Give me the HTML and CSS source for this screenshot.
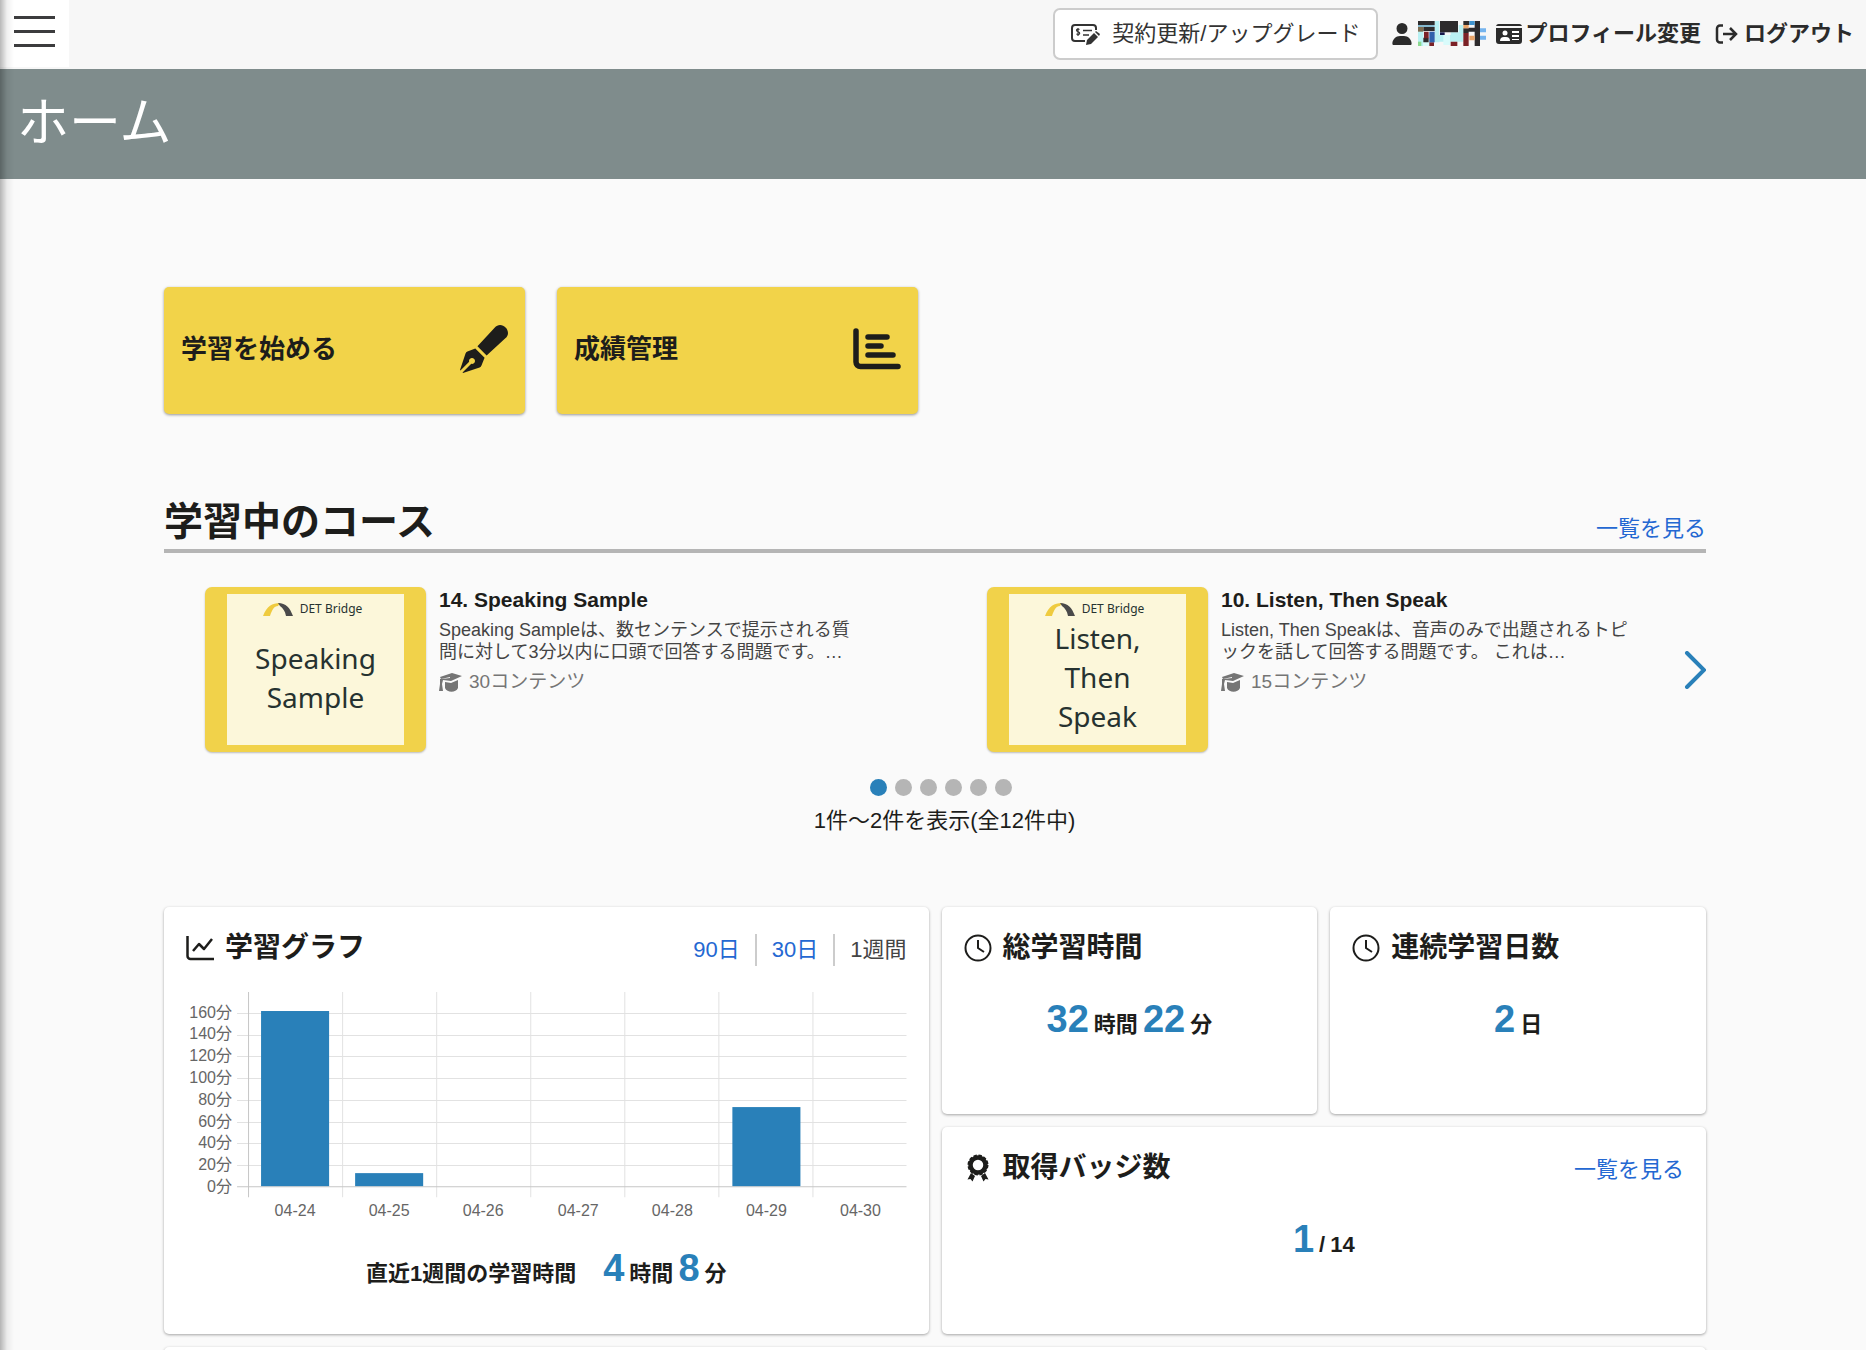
FILE: index.html
```html
<!DOCTYPE html>
<html lang="ja">
<head>
  <meta charset="UTF-8">
  <meta name="viewport" content="width=device-width, initial-scale=1">
  <title>ホーム</title>
  <link rel="stylesheet" href="styles.css">
</head>
<body>
  <div class="drawer-shadow"></div>

  <header class="topbar">
    <button class="menu-button" type="button" aria-label="メニュー">
      <svg width="42" height="32" viewBox="0 0 42 32" stroke="#3c3c3e" stroke-width="3">
        <path d="M0 1.500h41M0 15.500h41M0 29.500h41"/>
      </svg>
    </button>
    <nav class="topbar-nav">
      <button class="upgrade-button" type="button">
        <svg width="29" height="22" viewBox="0 0 29 22" fill="none" stroke="#333" stroke-width="2">
          <path d="M14 18H4a3 3 0 0 1-3-3V5a3 3 0 0 1 3-3h18a3 3 0 0 1 3 3v2"/>
          <path d="M12 7.500h9M12 12h6" stroke-width="1.600"/>
          <path d="M8.500 6.500c-1-.8-3-.6-3 .8 0 1.800 3.200 1 3.200 2.900 0 1.400-2.200 1.600-3.300.7M7 5v8" stroke-width="1.200"/>
          <path d="M15 22l1-5 7-7 4 4-7 7z" fill="#333" stroke="none"/>
          <path d="M24 9l1-1 4 3-1 2z" fill="#333" stroke="none"/>
        </svg>
        契約更新/アップグレード
      </button>
      <a href="#" class="user-link" aria-label="ユーザー">
        <svg width="20" height="22" viewBox="0 0 448 512" fill="#2b2b2b">
          <path d="M224 256A128 128 0 1 0 224 0a128 128 0 1 0 0 256zm-46 48C80 304 0 384 0 482c0 17 13 30 30 30h388c17 0 30-13 30-30 0-98-80-178-178-178z"/>
        </svg>
        <svg width="68" height="25" viewBox="0 0 204 75">
          <path fill="#b9f1f3" d="M0 22h16v53H0zM50 0h14v64H50zM64 42h34v20H64zM98 34h24v28H98zM122 12h14v50h-14z"/>
          <path fill="#d9fbfb" d="M76 42h20v30H76zM16 62h20v13H16z"/>
          <path fill="#2d2b2c" d="M0 0h50v12H0zM16 18h34v12H16zM66 0h54v34H66zM136 0h18v12h-18zM170 0h16v22h-16zM136 22h16v14h-16zM152 20h34v12h-34zM170 32h16v43h-16zM16 50h16v14H16z"/>
          <path fill="#85b9cf" d="M0 12h50v6H0z"/>
          <path fill="#7d6c50" d="M0 18h16v14H0z"/>
          <path fill="#7b2227" d="M18 32h14v20H18zM98 62h20v13H98zM136 36h16v39h-16zM34 64h14v11H34z"/>
          <path fill="#2f62ad" d="M34 32h16v32H34z"/>
          <path fill="#3f94cf" d="M154 0h16v12h-16z"/>
          <path fill="#75b4ee" d="M186 22h18v12h-18zM186 44h18v12h-18z"/>
          <path fill="#e9a468" d="M136 12h16v10h-16zM154 44h16v14h-16z"/>
          <path fill="#191a4c" d="M66 34h14v8H66z"/>
          <path fill="#8cd98f" d="M0 62h10v13H0z"/>
        </svg>
      </a>
      <a href="#">
        <svg width="26" height="20" viewBox="0 0 26 20">
          <path fill="#2b2b2b" d="M3 0h20a3 3 0 0 1 3 2H0a3 3 0 0 1 3-2zM0 4h26v13a3 3 0 0 1-3 3H3a3 3 0 0 1-3-3z"/>
          <circle cx="9" cy="9" r="2.500" fill="#fff"/>
          <path fill="#fff" d="M4 17a4 4 0 0 1 4-4h2a4 4 0 0 1 4 4zM16 7h7v2h-7zM16 11h7v2h-7zM16 15h7v1h-7z"/>
        </svg>
        プロフィール変更
      </a>
      <a href="#" class="logout-link">
        <svg width="23" height="20" viewBox="0 0 23 20" fill="none" stroke="#2b2b2b" stroke-width="2.500">
          <path d="M8 1.500H5a3 3 0 0 0-3 3v11a3 3 0 0 0 3 3h3M8 10h13M15 4l6 6-6 6"/>
        </svg>
        ログアウト
      </a>
    </nav>
  </header>

  <div class="page-title">
    <h1>ホーム</h1>
  </div>

  <main class="content">
    <div class="shortcuts">
      <a href="#" class="shortcut">
        学習を始める
        <svg width="48" height="48" viewBox="0 0 512 512" fill="#1d1d1b">
          <path d="M79.180 282.940a32 32 0 0 0-20.240 20.240L0 480l4.690 4.690 92.890-92.890c-.66-2.560-1.570-5.030-1.570-7.800 0-17.670 14.330-32 32-32s32 14.330 32 32-14.330 32-32 32c-2.770 0-5.240-.91-7.800-1.570l-92.890 92.890L32 512l176.820-58.940a32 32 0 0 0 20.240-20.240l33.070-84.070-98.880-98.880-84.070 33.070zM369.250 28.320L186.140 227.810l97.850 97.850 199.490-183.110C568.400 67.480 443.730-55.940 369.250 28.320z"/>
        </svg>
      </a>
      <a href="#" class="shortcut">
        成績管理
        <svg width="48" height="42" viewBox="0 0 48 42" fill="none" stroke="#1d1d1b" stroke-width="5.500" stroke-linecap="round">
          <path d="M3 3v31a4.500 4.500 0 0 0 4.500 4.500H45M15 9h19M15 18h13M15 27h25"/>
        </svg>
      </a>
    </div>

    <section class="courses">
      <div class="section-head">
        <h2>学習中のコース</h2>
        <a href="#">一覧を見る</a>
      </div>
      <div class="slider">
        <div class="slides">
          <article class="course">
            <div class="thumb">
              <div class="thumb-inner">
                <div class="thumb-logo">
                  <svg width="30" height="13" viewBox="0 0 30 13">
                    <path fill="#efcb3f" d="M0 13C4 3 9 0 17 0l-2 3c-4 0-6 4-8 10z"/>
                    <path fill="#4a4a4a" d="M15 0c8 0 12 5 15 13h-7c-1-5-3-8-6-10z"/>
                  </svg>
                  DET Bridge
                </div>
                <div class="thumb-name">Speaking Sample</div>
              </div>
            </div>
            <div class="course-text">
              <h3>14. Speaking Sample</h3>
              <p>Speaking Sampleは、数センテンスで提示される質問に対して3分以内に口頭で回答する問題です。…</p>
              <div class="course-count">
                <svg width="23" height="19" viewBox="0 0 23 19" fill="#757575">
                  <path d="M1 4L13 0l10 3-11 5-8-1-1 4 1 7H0l1-7V6h2l8-1v-1L2 6z"/>
                  <path d="M6 9l6 1 7-3v8c-2 5-11 5-13 0z"/>
                </svg>
                30コンテンツ
              </div>
            </div>
          </article>
          <article class="course">
            <div class="thumb">
              <div class="thumb-inner">
                <div class="thumb-logo">
                  <svg width="30" height="13" viewBox="0 0 30 13">
                    <path fill="#efcb3f" d="M0 13C4 3 9 0 17 0l-2 3c-4 0-6 4-8 10z"/>
                    <path fill="#4a4a4a" d="M15 0c8 0 12 5 15 13h-7c-1-5-3-8-6-10z"/>
                  </svg>
                  DET Bridge
                </div>
                <div class="thumb-name">Listen, Then Speak</div>
              </div>
            </div>
            <div class="course-text">
              <h3>10. Listen, Then Speak</h3>
              <p>Listen, Then Speakは、音声のみで出題されるトピックを話して回答する問題です。 これは…</p>
              <div class="course-count">
                <svg width="23" height="19" viewBox="0 0 23 19" fill="#757575">
                  <path d="M1 4L13 0l10 3-11 5-8-1-1 4 1 7H0l1-7V6h2l8-1v-1L2 6z"/>
                  <path d="M6 9l6 1 7-3v8c-2 5-11 5-13 0z"/>
                </svg>
                15コンテンツ
              </div>
            </div>
          </article>
        </div>
        <button class="slider-next" type="button" aria-label="次へ">
          <svg width="22" height="38" viewBox="0 0 22 38" fill="none" stroke="#2980b9" stroke-width="4" stroke-linecap="round">
            <path d="M3 2l17 17L3 36"/>
          </svg>
        </button>
      </div>
      <div class="dots">
        <button class="dot active" type="button" aria-label="1"></button>
        <button class="dot" type="button" aria-label="2"></button>
        <button class="dot" type="button" aria-label="3"></button>
        <button class="dot" type="button" aria-label="4"></button>
        <button class="dot" type="button" aria-label="5"></button>
        <button class="dot" type="button" aria-label="6"></button>
      </div>
      <p class="slider-caption">1件～2件を表示(全12件中)</p>
    </section>

    <section class="stats">
      <div class="card card-graph">
        <div class="card-head">
          <h2>
            <svg width="28" height="26" viewBox="0 0 28 26" fill="none" stroke="#1d1d1b" stroke-width="2.500">
              <path d="M1.500 1v20a3 3 0 0 0 3 3H28M7 16l6-7 5 5 8-10" stroke-linejoin="round"/>
            </svg>
            学習グラフ
          </h2>
          <div class="range">
            <a href="#">90日</a>
            <a href="#">30日</a>
            <span>1週間</span>
          </div>
        </div>
        <svg class="chart" viewBox="0 0 720 232">
          <g class="grid">
            <path d="M51 23.500H720M51 45.500H720M51 66.500H720M51 88.500H720M51 110.500H720M51 132.500H720M51 153.500H720M51 175.500H720"/>
            <path d="M156.500 2V207M250.500 2V207M344.500 2V207M438.500 2V207M532.500 2V207M626.500 2V207"/>
          </g>
          <path class="axis" d="M62.500 2V207M51 196.500H720"/>
          <g class="bars">
            <rect x="75" y="21" width="68" height="175"/>
            <rect x="169" y="183" width="68" height="13"/>
            <rect x="546" y="117" width="68" height="79"/>
          </g>
          <g class="y-labels">
            <text x="46" y="28">160分</text>
            <text x="46" y="49">140分</text>
            <text x="46" y="71">120分</text>
            <text x="46" y="93">100分</text>
            <text x="46" y="115">80分</text>
            <text x="46" y="137">60分</text>
            <text x="46" y="158">40分</text>
            <text x="46" y="180">20分</text>
            <text x="46" y="202">0分</text>
          </g>
          <g class="x-labels">
            <text x="109" y="226">04-24</text>
            <text x="203" y="226">04-25</text>
            <text x="297" y="226">04-26</text>
            <text x="392" y="226">04-27</text>
            <text x="486" y="226">04-28</text>
            <text x="580" y="226">04-29</text>
            <text x="674" y="226">04-30</text>
          </g>
        </svg>
        <p class="figure">
          <span class="figure-label">直近1週間の学習時間</span>
          <strong>4</strong><span>時間</span><strong>8</strong><span>分</span>
        </p>
      </div>

      <div class="card card-total">
        <div class="card-head">
          <h2>
            <svg width="28" height="28" viewBox="0 0 28 28" fill="none" stroke="#1d1d1b" stroke-width="2">
              <circle cx="14" cy="14" r="12.500"/>
              <path d="M14 6v8l6 4"/>
            </svg>
            総学習時間
          </h2>
        </div>
        <p class="figure"><strong>32</strong><span>時間</span><strong>22</strong><span>分</span></p>
      </div>

      <div class="card card-streak">
        <div class="card-head">
          <h2>
            <svg width="28" height="28" viewBox="0 0 28 28" fill="none" stroke="#1d1d1b" stroke-width="2">
              <circle cx="14" cy="14" r="12.500"/>
              <path d="M14 6v8l6 4"/>
            </svg>
            連続学習日数
          </h2>
        </div>
        <p class="figure"><strong>2</strong><span>日</span></p>
      </div>

      <div class="card card-badges">
        <div class="card-head">
          <h2>
            <svg width="28" height="28" viewBox="0 0 28 28" fill="none" stroke="#1d1d1b">
              <circle cx="14" cy="11" r="7.500" stroke-width="4.500"/>
              <circle cx="14" cy="11" r="9.700" stroke-width="1.600" stroke-dasharray="3.400 1.700"/>
              <path d="M7 19l4 3-2.500 5.500-2-2.500-3 .5zM21 19l-4 3 2.500 5.500 2-2.500 3 .5z" fill="#1d1d1b" stroke="none"/>
            </svg>
            取得バッジ数
          </h2>
          <a href="#">一覧を見る</a>
        </div>
        <p class="figure"><strong>1</strong><span>/</span><span>14</span></p>
      </div>

      <div class="card card-next"></div>
    </section>
  </main>
</body>
</html>
```

FILE: styles.css
```css
* {
  box-sizing: border-box;
}
body {
  margin: 0;
  height: 100vh;
  overflow: hidden;
  background-color: #fafafa;
  color: #1d1d1b;
  font-family: "Liberation Sans", "Noto Sans CJK JP", sans-serif;
  font-size: 22px;
  line-height: 32px;
}
h1, h2, h3, p {
  margin: 0;
}
a {
  color: #2468d2;
  text-decoration: none;
}
button {
  padding: 0;
  border: 0;
  background: none;
  color: inherit;
  font: inherit;
  cursor: pointer;
}
svg {
  flex: none;
  display: block;
}

/* edge of the closed side menu */
.drawer-shadow {
  position: fixed;
  top: 0;
  left: 0;
  width: 14px;
  height: 100%;
  background: linear-gradient(to right, rgba(0, 0, 0, 0.28), rgba(0, 0, 0, 0.06) 50%, transparent);
  pointer-events: none;
}

.topbar {
  display: flex;
  justify-content: space-between;
  align-items: center;
  height: 69px;
  padding: 0 12px 2px 0;
  background-color: #f7f7f7;
}
.menu-button {
  display: flex;
  align-items: center;
  align-self: stretch;
  width: 69px;
  padding: 0 14px 3px;
  background-color: #fff;
}
.topbar-nav {
  display: flex;
  align-items: center;
  gap: 10px;
}
.topbar-nav a {
  display: flex;
  align-items: center;
  gap: 3px;
  color: #2b2b2b;
  font-weight: bold;
}
.upgrade-button {
  display: flex;
  align-items: center;
  gap: 12px;
  height: 52px;
  padding: 0 16px;
  margin-right: 4px;
  border: 2px solid #ccc;
  border-radius: 7px;
  background-color: #fff;
  color: #333;
}
.topbar-nav .user-link,
.topbar-nav .logout-link {
  gap: 6px;
}
.topbar-nav .logout-link {
  padding-left: 4px;
}

.page-title {
  padding: 22px 17px 24px;
  background-color: #7f8c8c;
  color: #fff;
}
.page-title h1 {
  font-size: 52px;
  font-weight: normal;
  line-height: 64px;
}

.content {
  padding: 108px 160px 0 164px;
}

.shortcuts {
  display: flex;
  gap: 32px;
}
.shortcut {
  display: flex;
  justify-content: space-between;
  align-items: center;
  flex: 0 0 361px;
  height: 127px;
  padding: 0 17px 4px;
  border-radius: 5px;
  background-color: #f2d349;
  box-shadow: 0 1px 3px rgba(0, 0, 0, 0.4);
  color: #1d1d1b;
  font-size: 26px;
  font-weight: bold;
}

.courses {
  margin-top: 85px;
}
.section-head {
  display: flex;
  justify-content: space-between;
  align-items: flex-end;
  padding-bottom: 4px;
  border-bottom: 4px solid #b5b5b5;
}
.section-head h2 {
  font-size: 39px;
  line-height: 46px;
}
.slider {
  display: flex;
  align-items: center;
  gap: 20px;
  padding: 34px 0 0 41px;
}
.slides {
  display: grid;
  grid-template-columns: 1fr 1fr;
  gap: 105px;
  flex: 1;
}
.course {
  display: flex;
  gap: 13px;
}
.thumb {
  display: flex;
  flex: 0 0 221px;
  height: 165px;
  padding: 7px 22px;
  border-radius: 7px;
  background-color: #f1d24a;
  box-shadow: 0 1px 2px rgba(0, 0, 0, 0.25);
}
.thumb-inner {
  display: flex;
  flex-direction: column;
  align-items: center;
  flex: 1;
  background-color: #fcf7da;
  color: #263230;
  font-family: "Noto Sans", "Noto Sans CJK JP", sans-serif;
}
.thumb-logo {
  display: flex;
  align-items: center;
  gap: 7px;
  padding: 6px 6px 0 0;
  font-size: 12px;
  line-height: 18px;
}
.thumb-name {
  display: flex;
  align-items: center;
  flex: 1;
  width: 130px;
  padding-bottom: 8px;
  font-size: 28px;
  line-height: 39px;
  text-align: center;
}
.course-text h3 {
  font-size: 21px;
  line-height: 26px;
}
.course-text p {
  max-width: 418px;
  margin: 6px 0 5px;
  color: #444;
  font-size: 18px;
  line-height: 22px;
}
.course-count {
  display: flex;
  align-items: center;
  gap: 7px;
  color: #757575;
  font-size: 19px;
  line-height: 28px;
}
.dots {
  display: flex;
  justify-content: center;
  gap: 8px;
  padding: 27px 0 0 11px;
}
.dot {
  width: 17px;
  height: 17px;
  border-radius: 50%;
  background-color: #b5b5b5;
}
.dot.active {
  background-color: #2980b9;
}
.slider-caption {
  padding: 9px 0 0 19px;
  text-align: center;
}

.stats {
  display: grid;
  grid-template-columns: repeat(4, 1fr);
  grid-template-rows: 207px 207px 100px;
  gap: 13px;
  margin-top: 70px;
}
.card {
  min-width: 0;
  padding: 23px 22px;
  border-radius: 5px;
  background-color: #fff;
  box-shadow: 0 1px 3px rgba(0, 0, 0, 0.35);
}
.card-graph {
  grid-column: 1 / 3;
  grid-row: 1 / 3;
}
.card-badges {
  grid-column: 3 / 5;
}
.card-next {
  grid-column: 1 / 5;
}
.card-head {
  display: flex;
  justify-content: space-between;
  align-items: center;
}
.card-head h2 {
  display: flex;
  align-items: center;
  gap: 11px;
  font-size: 28px;
  line-height: 36px;
}
.card-head > a,
.range {
  padding-top: 4px;
}
.range {
  display: flex;
}
.range > * {
  padding: 0 15px;
  border-left: 2px solid #ccc;
}
.range > :first-child {
  border-left: 0;
}
.range > :last-child {
  padding-right: 0;
  color: #444;
}
.figure {
  display: flex;
  justify-content: center;
  align-items: baseline;
  gap: 5px;
  margin-top: 33px;
  font-weight: bold;
  line-height: 40px;
}
.figure strong {
  color: #2980b9;
  font-size: 38px;
}
.figure-label {
  margin-right: 22px;
}
.card-graph .figure {
  margin-top: 26px;
}

.chart {
  width: 100%;
  margin-top: 24px;
}
.chart .grid {
  fill: none;
  stroke: #e2e2e2;
}
.chart .axis {
  fill: none;
  stroke: #c6c6c6;
}
.chart .bars {
  fill: #2980b9;
}
.chart text {
  fill: #666;
  font-size: 16px;
}
.chart .y-labels {
  text-anchor: end;
}
.chart .x-labels {
  text-anchor: middle;
}
```
